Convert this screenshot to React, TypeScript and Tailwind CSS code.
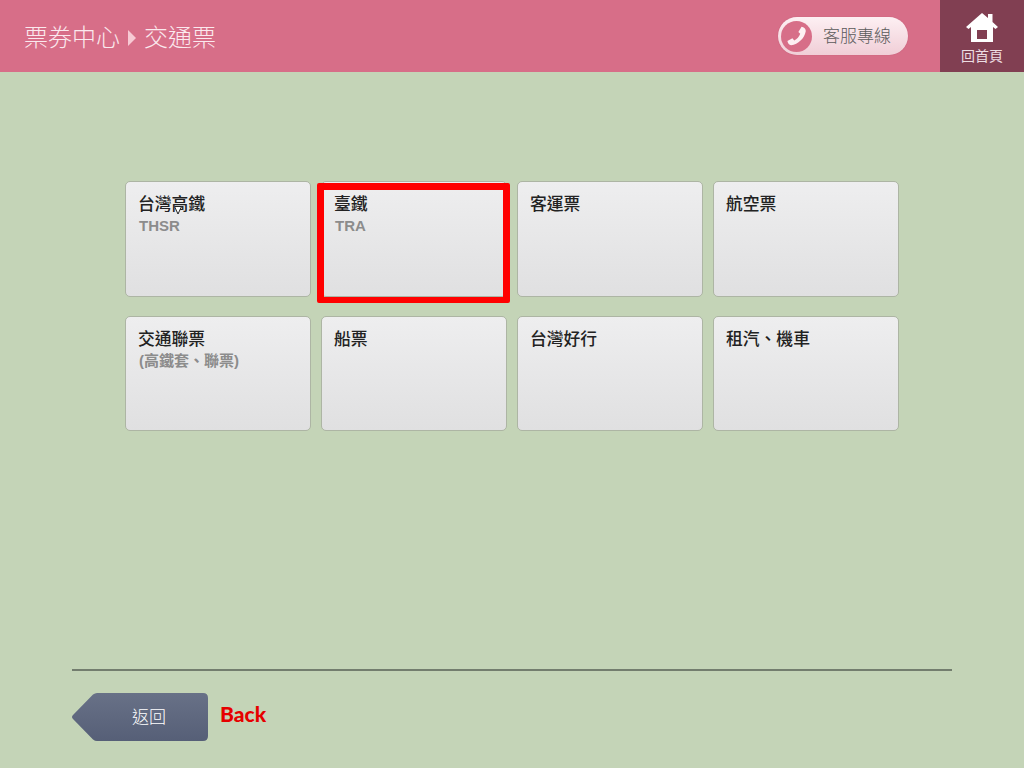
const cjk = "font-['Liberation_Sans','Noto_Sans_CJK_TC',sans-serif]";

function Card({ title, sub, selected }: { title: string; sub?: string; selected?: boolean }) {
  return (
    <div className="relative rounded-[5px] border border-[#adb5a4] bg-gradient-to-b from-[#eeeeef] to-[#e0e0e1] pl-3 pt-[13px]">
      <div className="text-[16.8px] font-medium leading-[20px] text-[#222222]">{title}</div>
      {sub && <div className="ml-[1px] mt-[2px] text-[15px] font-bold leading-[18px] text-[#8c8c8c]">{sub}</div>}
      {selected && (
        <div className="absolute left-[-5px] top-[1px] h-[120px] w-[193px] rounded-[2px] border-[7px] border-b-[6px] border-[#ff0000]" />
      )}
    </div>
  );
}

export default function App() {
  return (
    <div className={`${cjk} flex h-[768px] w-[1024px] flex-col overflow-hidden bg-[#c4d4b7]`}>
      <header className="flex h-[72px] items-center bg-[#d76e88]">
        <div className="flex flex-1 items-center pl-[24px] pt-[3px] text-[24px] font-light leading-none text-[#fbe9ee]">
          <span>票券中心</span>
          <svg width="10" height="18" viewBox="0 0 10 18" className="ml-[7px] mr-[7px]">
            <path d="M1 1 L9 9 L1 17 Z" fill="#f7c9d4" />
          </svg>
          <span>交通票</span>
        </div>
        <div className="mr-[32px] flex h-[38px] w-[130px] items-center rounded-full bg-gradient-to-b from-[#fdf0f3] to-[#f0ced7] pl-[3px] shadow-[0_0_1px_#b0506a]">
          <div className="flex h-[31px] w-[31px] items-center justify-center rounded-full bg-[#d76e88]">
            <svg width="22" height="22" viewBox="0 0 24 24">
              <path d="M17 2 C19.5 2.5 22 4.5 21.5 7 C20 14.5 13.5 21 5.5 22 C3.5 22 2 20 1.5 17.5 L7 14.5 L9 17 C12 15.5 14.5 12.5 15.5 9.5 L13.5 7.5 Z" fill="#fdf0f3" />
            </svg>
          </div>
          <span className="ml-[11px] text-[17px] font-light leading-none text-[#5a5a5a]">客服專線</span>
        </div>
        <div className="flex h-[72px] w-[84px] flex-col items-center bg-[#813f52] pt-[13px]">
          <svg width="32" height="29" viewBox="0 0 32 29">
            <path fillRule="evenodd" d="M16 0 L22 5 L22 1 L26.5 1 L26.5 9 L32 14 L29.5 16 L27 14 L27 29 L5 29 L5 14 L2.5 16 L0 14 Z M11 17 L11 26 L21 26 L21 17 Z" fill="#ffffff" />
          </svg>
          <span className="mt-[7px] text-[14px] leading-none text-[#eddde2]">回首頁</span>
        </div>
      </header>

      <main className="flex-1 pl-[125px] pt-[109px]">
        <div className="relative grid w-[774px] grid-cols-[186px_186px_186px_186px] grid-rows-[116px_115px] gap-x-[10px] gap-y-[19px]">
          <Card title="台灣高鐵" sub="THSR" />
          <Card title="臺鐵" sub="TRA" selected />
          <Card title="客運票" />
          <Card title="航空票" />
          <Card title="交通聯票" sub="(高鐵套、聯票)" />
          <Card title="船票" />
          <Card title="台灣好行" />
          <Card title="租汽、機車" />
          <svg width="8" height="9" viewBox="0 0 8 9" className="absolute left-[49px] top-[25px]">
            <path d="M0.5 0.5 L7.5 0.5 L4 8 Z" fill="#ffffff" stroke="#222222" strokeWidth="1" />
          </svg>
        </div>
      </main>

      <footer className="mx-[72px] h-[99px] border-t-2 border-[#737d6e] pt-[22px]">
        <div className="flex items-center">
          <button className="relative flex h-[48px] w-[136px] items-center justify-center pl-[18px] text-[17px] font-light leading-none text-[#ffffff]">
            <svg width="136" height="48" viewBox="0 0 136 48" className="absolute left-0 top-0">
              <defs>
                <linearGradient id="backFill" x1="0" y1="0" x2="0" y2="1">
                  <stop offset="0" stopColor="#687187" />
                  <stop offset="1" stopColor="#565f77" />
                </linearGradient>
              </defs>
              <path d="M1 26 Q-1 24 1 22 L21 1.5 Q23 0 25 0 L131 0 Q136 0 136 5 L136 43 Q136 48 131 48 L25 48 Q23 48 21 46.5 Z" fill="url(#backFill)" />
            </svg>
            <span className="relative">返回</span>
          </button>
          <span className="mb-[8px] ml-[12px] font-['Lato',sans-serif] text-[21px] font-black leading-none text-[#e60000]">Back</span>
        </div>
      </footer>
    </div>
  );
}
